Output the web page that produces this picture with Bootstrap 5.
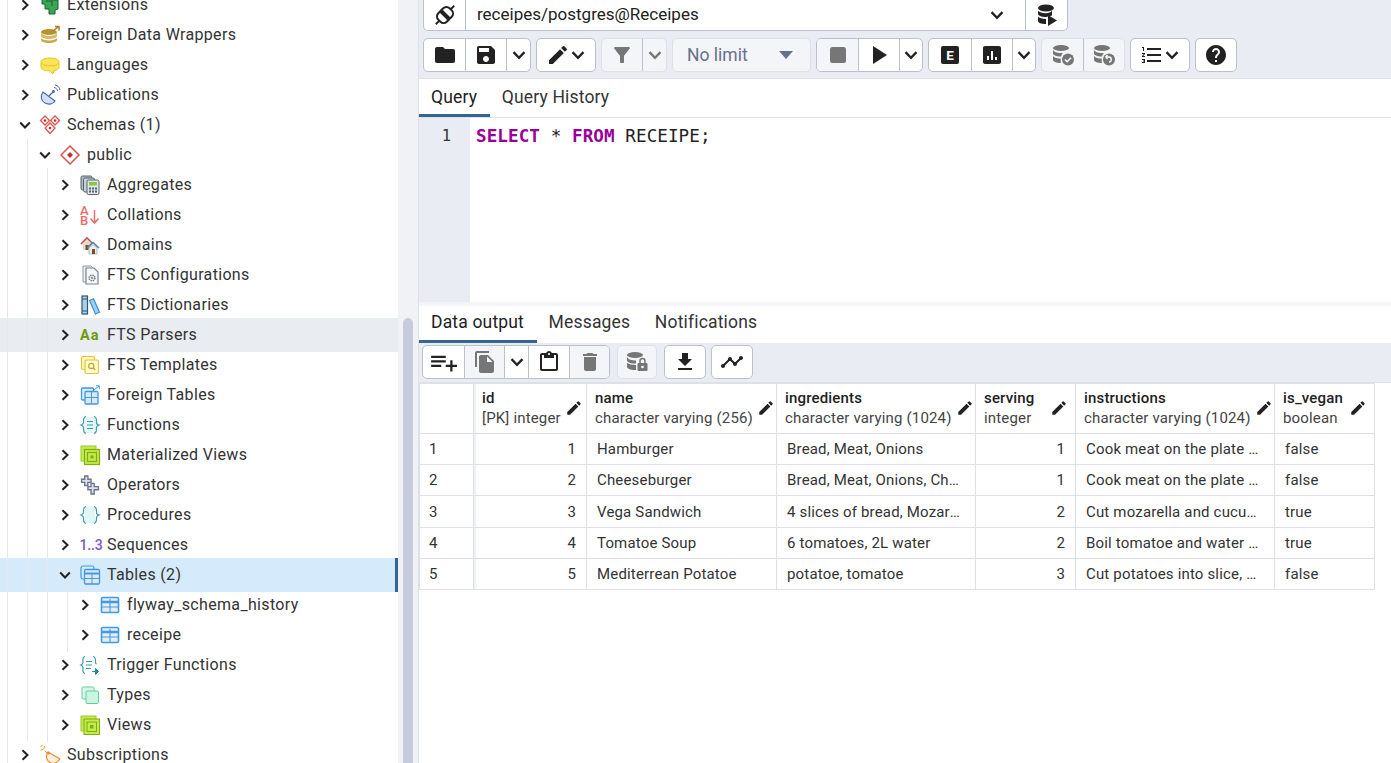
<!DOCTYPE html>
<html lang="en"><head><meta charset="utf-8"><title>pgAdmin query tool</title>
<link href="https://cdn.jsdelivr.net/npm/bootstrap@5.3.0/dist/css/bootstrap.min.css" rel="stylesheet">
<style>
html,body{height:763px;overflow:hidden;background:#fff;font-family:Roboto,"Liberation Sans",sans-serif;color:#222;font-size:16px}
.side{width:419px;height:763px;border-right:1px solid #dde0e6;flex:none}
.tree{width:398px;height:763px;overflow:hidden;position:relative;z-index:0;flex:none}
.rootg{margin-top:-12px;margin-left:7px;border-left:1px solid #e6e8ec}
.subg{margin-left:19px;border-left:1px solid #e6e8ec;padding-bottom:4px;margin-bottom:-4px}
.trow{height:34px;margin-bottom:-4px;display:flex;align-items:center;padding-left:10px;position:relative;color:#333;white-space:nowrap;letter-spacing:.33px}
.trow.hov::before,.trow.sel::before{content:"";position:absolute;z-index:-1;left:-100px;right:0;top:0;bottom:0;background:#e9ecf1}
.trow.sel::before{background:#d5ebfb;border-right:3px solid #326690}
.chev{width:14px;height:14px;flex:none;color:#222}
.ticon{width:20px;height:20px;margin:0 7px 0 8px;flex:none;display:block;overflow:visible}
.sbar{width:20px;background:#f0f2f5;padding:318px 5px 0;flex:none}
.thumb{width:10px;height:460px;border-radius:5px 5px 0 0;background:#c6ccd9}
.bar{background:#e9ecf2;padding:0 4px;border-bottom:1px solid #dde0e6}
.bar1{height:79px}
.bar2{height:40px;padding:2px 3px 0}
.conn{height:31px;width:645px;display:flex;background:#fff;border:1px solid #bac1cd;border-top:0;border-radius:0 0 5px 5px;margin-bottom:7px;overflow:hidden}
.conn>div{display:flex;align-items:center;justify-content:center}
.cname{flex:1;justify-content:space-between!important;padding:0 20px 0 11px;border-left:1px solid #bac1cd;border-right:1px solid #bac1cd;font-size:17px;color:#222}
.tools{display:flex;gap:5px}
.tools.wide{gap:7px}
.tight{margin-left:-2px}
.grp{display:flex;height:34px;border:1px solid #bac1cd;border-radius:5px;overflow:hidden;background:#fff}
.grp.off{border-color:#dde0e6;background:#f3f5f9}
.cell{height:100%;display:flex;align-items:center;justify-content:center;border-left:1px solid #bac1cd;color:#222;flex:none}
.cell:first-child{border-left:0}
.cell.dim{background:#f3f5f9;color:#767676}
.grp.mix{border-color:#bac1cd}
.grp.off .cell{border-color:#bac1cd;color:#767676}
.ic{width:24px;height:24px;fill:currentColor;display:block}
.ic.big{width:27px;height:27px}
.ic.plug{fill:none;stroke:#222;stroke-width:2;overflow:visible}
.cv{width:16px;height:16px;display:block}
.nolimit{width:139px;justify-content:space-between;padding:0 16px 0 14px;display:flex;align-items:center;height:34px;border:1px solid #dde0e6;border-radius:5px;background:#f3f5f9;color:#66708a;font-size:17.5px}
.tabsr{display:flex;background:#fff;border-bottom:1px solid #dde0e6;height:39px}
.tabsr2{height:37px;border-bottom:0}
.tabx{padding:1px 12.5px 0 12px;height:100%;display:flex;align-items:center;font-size:17.5px;letter-spacing:.17px;color:#333;border-bottom:3px solid transparent}
.tabsr2 .tabx{padding:0 12.6px 1px 12px}
.tabx.on{border-bottom-color:#326690;color:#222}
.edit{height:184px;display:flex;background:#fff}
.gut{width:51px;background:#e9ecf2;text-align:right;padding:5px 19px 0 0;font-family:"DejaVu Sans Mono",monospace;font-size:15.5px;line-height:26px;color:#333;flex:none}
.code{padding:5px 6px 0;font-family:"DejaVu Sans Mono",monospace;font-size:17.6px;letter-spacing:.07px;line-height:26px;color:#222}
.kw{color:#909;font-weight:700}
.split{height:4px;background:#f3f4f7}
.dtable{table-layout:fixed;width:955px;border-collapse:collapse;margin:0;font-size:15px;letter-spacing:.17px;color:#333}
.dtable th,.dtable td{border:1px solid #dde0e6;white-space:nowrap;overflow:hidden;vertical-align:middle}
.dtable td{height:31px;padding:0 13px 0 10px;text-overflow:ellipsis}
.dtable tr.tall td{height:32px;padding-top:1px}
.dtable th{height:50px;font-weight:400;padding:0 8px 2px;border-top-color:#dde0e6}
.dtable td.num{text-align:right;padding:0 10px}
.dtable td.rn{padding:0 9px;color:#333}
.dtable .shade{box-shadow:inset 5px 0 4px -4px #e4e6ea}
.hw{display:flex;align-items:center;justify-content:space-between}
.hw b{display:block;font-weight:500;font-size:15px;line-height:20px;color:#222}
.hw span{display:block;line-height:20px;font-size:15px;color:#444}
.pen{width:18px;height:18px;fill:#222;flex:none;margin-right:-7px}
.pen.pid{margin-right:-5px}
.pen.pnar{margin-right:-1px}
.c0{width:54px}.c1{width:113px}.c2{width:190px}.c3{width:199px}.c4{width:100px}.c5{width:199px}.c6{width:100px}
</style></head><body>
<svg width="0" height="0" class="position-absolute">
<symbol id="r" viewBox="0 0 14 14"><path d="M4.5 2.2 9.5 7l-5 4.8" fill="none" stroke="currentColor" stroke-width="2"/></symbol>
<symbol id="d" viewBox="0 0 14 14"><path d="M2.2 4.5 7 9.5l4.8-5" fill="none" stroke="currentColor" stroke-width="2"/></symbol>
<symbol id="tb" viewBox="0 0 20 20"><rect x="1.5" y="2.5" width="17" height="15" rx="1" fill="#e9ecef" stroke="#3d9be9" stroke-width="1.6"/><path d="M1.5 7h17" stroke="#3d9be9" stroke-width="2.5"/><path d="M10 4v13M1.5 12h17" stroke="#3d9be9" stroke-width="1.1"/></symbol>
<symbol id="pn" viewBox="0 0 24 24"><path d="M3 17.250V21h3.750L17.810 9.940l-3.750-3.750L3 17.250zM20.710 7.040a1 1 0 0 0 0-1.410l-2.340-2.340a1 1 0 0 0-1.410 0l-1.830 1.830 3.750 3.750 1.830-1.830z"/></symbol>
</svg>
<div class="d-flex">
<aside class="side d-flex">
<div class="tree"><div class="rootg">
<div class="trow"><svg class="chev"><use href="#r"/></svg><svg class="ticon" viewBox="0 0 20 20"><path d="M2 0h10v5h6v9l-3 1v4H9v-5H5V9H2z" fill="#3aa655" stroke="#14602a"/><path d="M6 6h6v5" stroke="#14602a" fill="none"/></svg>Extensions</div>
<div class="trow"><svg class="chev"><use href="#r"/></svg><svg class="ticon" viewBox="0 0 20 20"><ellipse cx="9" cy="7" rx="8" ry="3" fill="#b8922e"/><path d="M1 8v3c0 1.600 3.500 3 8 3s8-1.400 8-3V8c-1 1.500-4 3-8 3S2 9.500 1 8z" fill="#d6bb66"/><path d="M1 13v2c0 1.600 3.500 3 8 3s8-1.400 8-3v-2c-1 1.500-4 2.500-8 2.500S2 14.500 1 13z" fill="#c9a94a"/><path d="M13 6l5-4M15 1.500h4v4" stroke="#a88426" stroke-width="1.500" fill="none"/></svg>Foreign Data Wrappers</div>
<div class="trow"><svg class="chev"><use href="#r"/></svg><svg class="ticon" viewBox="0 0 20 20"><path d="M10 3c5 0 9 1.500 9 4v5c0 2-2 3-5 3.500L13 19l-3-3.200C5 15.800 1 14.500 1 12V7c0-2.500 4-4 9-4z" fill="#ffe45c" stroke="#e3c419"/><path d="M1.500 8c1 2 4.500 3 8.500 3s7.500-1 8.500-3" fill="none" stroke="#e3c419"/></svg>Languages</div>
<div class="trow"><svg class="chev"><use href="#r"/></svg><svg class="ticon" viewBox="0 0 20 20"><path d="M3 7c-3 4-2 9 2 11s8 1 10-2z" fill="#d5e0f5" stroke="#4468bd" stroke-width="1.200"/><path d="M9 11l4-4" stroke="#4468bd" stroke-width="1.200"/><circle cx="13.500" cy="6.500" r="1.400" fill="#4468bd"/><path d="M14 2.500c2 .3 3.400 1.700 3.600 3.500M15 0c2.800.4 4.600 2.400 5 5" stroke="#4468bd" fill="none"/></svg>Publications</div>
<div class="trow"><svg class="chev"><use href="#d"/></svg><svg class="ticon" viewBox="0 0 20 20"><g fill="#fff" stroke="#d9534f" stroke-width="1.300"><path d="M5 1l4.500 4.500L5 10 .5 5.500z"/><path d="M15 1l4.500 4.500L15 10l-4.500-4.500z"/><path d="M10 8l5 5-5 5.500L5 13z"/></g><circle cx="5" cy="5.500" r="1.300" fill="#b8322d"/><circle cx="15" cy="5.500" r="1.300" fill="#b8322d"/><circle cx="10" cy="13" r="1.300" fill="#b8322d"/></svg>Schemas (1)</div>
<div class="subg">
<div class="trow"><svg class="chev"><use href="#d"/></svg><svg class="ticon" viewBox="0 0 20 20"><path d="M10 1l9 9-9 9-9-9z" fill="#fff" stroke="#d9534f" stroke-width="1.500"/><path d="M10 7l3 3-3 3-3-3z" fill="#c4302b"/></svg>public</div>
<div class="subg">
<div class="trow"><svg class="chev"><use href="#r"/></svg><svg class="ticon" viewBox="0 0 20 20"><rect x="1" y="1" width="11" height="14" rx="1.500" fill="#aeb9c1" stroke="#546570"/><rect x="3.500" y="3" width="11" height="14" rx="1.500" fill="#c9d1d7" stroke="#546570"/><rect x="7" y="5" width="12" height="14.500" rx="1.500" fill="#dfe6ea" stroke="#546570"/><rect x="9" y="7" width="8" height="3.500" fill="#8dc63f"/><path d="M9 12.500h2v2H9zM12 12.500h2v2h-2zM15 12.500h2v2h-2zM9 15.500h2v2H9zM12 15.500h2v2h-2zM15 15.500h2v2h-2z" fill="#546570"/></svg>Aggregates</div>
<div class="trow"><svg class="chev"><use href="#r"/></svg><svg class="ticon" viewBox="0 0 20 20"><text x="0" y="9.500" font-family="Roboto,sans-serif" font-weight="500" font-size="13" letter-spacing="0" fill="#e96b6b">A</text><text x="0" y="20" font-family="Roboto,sans-serif" font-weight="500" font-size="13" letter-spacing="0" fill="#e96b6b">B</text><path d="M14.500 5v13M10.500 13.500l4 4.500 4-4.500" stroke="#e96b6b" stroke-width="1.500" fill="none"/></svg>Collations</div>
<div class="trow"><svg class="chev"><use href="#r"/></svg><svg class="ticon" viewBox="0 0 20 20"><path d="M1 9l6-6 5 5" fill="none" stroke="#c2524a" stroke-width="1.600"/><path d="M3 9v6h8V8L7 4.500z" fill="#e6d9c5"/><rect x="5.500" y="10" width="3" height="5" fill="#7a4a2b"/><path d="M7 13l6-5.500L19 13" fill="none" stroke="#4f7da3" stroke-width="1.600"/><path d="M9 13v6h8v-6l-4-3.500z" fill="#f2efe8" stroke="#8aa4b8" stroke-width=".7"/><rect x="12" y="14" width="3" height="5" fill="#7a4a2b"/></svg>Domains</div>
<div class="trow"><svg class="chev"><use href="#r"/></svg><svg class="ticon" viewBox="0 0 20 20"><path d="M3 1h8l3 3v13H3z" fill="#eceff1" stroke="#8f9aa3"/><path d="M6 3h8l4 4v12H6z" fill="#f6f7f8" stroke="#7a858e" stroke-width="1.200"/><circle cx="12" cy="13" r="2.800" fill="none" stroke="#6d7780" stroke-width="1.600" stroke-dasharray="1.400 .8"/><circle cx="12" cy="13" r="1" fill="#6d7780"/></svg>FTS Configurations</div>
<div class="trow"><svg class="chev"><use href="#r"/></svg><svg class="ticon" viewBox="0 0 20 20"><rect x="2" y="1" width="5.500" height="18" fill="#a6d1ef" stroke="#36556f" stroke-width="1.200"/><path d="M2 4h5.500M2 16h5.500" stroke="#36556f"/><path d="M9.500 5.500l4-1.800 6 13.500-4 1.800z" fill="#9ed0f2" stroke="#3d92d0" stroke-width="1.200"/></svg>FTS Dictionaries</div>
<div class="trow hov"><svg class="chev"><use href="#r"/></svg><svg class="ticon" viewBox="0 0 20 20"><text x="0" y="15" font-family="Roboto,sans-serif" font-weight="700" font-size="14.500" letter-spacing="1" fill="#6c9a0c">Aa</text></svg>FTS Parsers</div>
<div class="trow"><svg class="chev"><use href="#r"/></svg><svg class="ticon" viewBox="0 0 20 20"><rect x="1.500" y="1.500" width="13" height="13" rx="1.500" fill="#fdf6c8" stroke="#dfc92c" stroke-width="1.200"/><rect x="5" y="5" width="13.500" height="13.500" rx="1.500" fill="#fdf9d9" stroke="#dfc92c" stroke-width="1.200"/><circle cx="11.300" cy="11" r="2.600" fill="none" stroke="#c8a71c" stroke-width="1.200"/><path d="M13.200 13l2 2" stroke="#c8a71c" stroke-width="1.300"/></svg>FTS Templates</div>
<div class="trow"><svg class="chev"><use href="#r"/></svg><svg class="ticon" viewBox="0 0 20 20"><rect x="1.500" y="3" width="12" height="12" rx="1" fill="#d8ecfb" stroke="#3d9be9" stroke-width="1.300"/><rect x="5" y="6.500" width="13" height="12.500" rx="1" fill="#dfe7ee" stroke="#3d9be9" stroke-width="1.300"/><path d="M11.500 6.500V19M5 12.500h13" stroke="#3d9be9"/><path d="M14 5l5-4M16 .8h3.300v3.400" stroke="#3d9be9" fill="none"/></svg>Foreign Tables</div>
<div class="trow"><svg class="chev"><use href="#r"/></svg><svg class="ticon" viewBox="0 0 20 20"><path d="M6 1.500C3 2 3.500 5.500 3.500 7.500 3.500 9 1 10 1 10s2.500 1 2.500 2.500S3 18 6 18.500M14 1.500c3 .5 2.500 4 2.500 6s2.500 2.500 2.500 2.500-2.500 1-2.500 2.500.5 5.500-2.500 6" fill="#e4f6f8" stroke="#3a9caa" stroke-width="1.200"/><rect x="6" y="2" width="8" height="16" fill="#e4f6f8"/><path d="M7 6.500h6M7 10h6M7 13.500h6" stroke="#3a9caa" stroke-width="1.200"/></svg>Functions</div>
<div class="trow"><svg class="chev"><use href="#r"/></svg><svg class="ticon" viewBox="0 0 20 20"><rect x="1" y="1" width="15" height="15" fill="#c3ea4e" stroke="#9ccc23"/><rect x="4.500" y="4.500" width="15" height="15" fill="#c3ea4e" stroke="#7fae11" stroke-width="1.200"/><rect x="7.500" y="7.500" width="9" height="9" fill="none" stroke="#7fae11" stroke-width="1.200"/><rect x="10.500" y="10.500" width="3" height="3" fill="#7fae11"/></svg>Materialized Views</div>
<div class="trow"><svg class="chev"><use href="#r"/></svg><svg class="ticon" viewBox="1 0 18 19"><path d="M5 1h3v3h3v3H8v3H5V7H2V4h3zM11 8h3v3h4v3h-4v4h-3v-4H8v-3h3z" fill="#dce0e8" stroke="#6b7488" stroke-width="1.300"/></svg>Operators</div>
<div class="trow"><svg class="chev"><use href="#r"/></svg><svg class="ticon" viewBox="0 0 20 20"><rect x="5" y="1.500" width="10" height="17" rx="4" fill="#dff7f7"/><path d="M6 1.500C3 2 3.500 5.500 3.500 7.500 3.500 9 1 10 1 10s2.500 1 2.500 2.500S3 18 6 18.500" fill="none" stroke="#3a9caa" stroke-width="1.200"/><path d="M14 1.500c3 .5 2.500 4 2.500 6s2.500 2.500 2.500 2.500-2.500 1-2.500 2.500.5 5.500-2.500 6" fill="none" stroke="#3a9caa" stroke-width="1.200"/></svg>Procedures</div>
<div class="trow"><svg class="chev"><use href="#r"/></svg><svg class="ticon" viewBox="0 0 20 20"><text x="-.5" y="15" font-family="Roboto,sans-serif" font-weight="500" font-size="14" letter-spacing="-.2" fill="#7e57c9">1..3</text></svg>Sequences</div>
<div class="trow sel"><svg class="chev"><use href="#d"/></svg><svg class="ticon" viewBox="0 0 20 20"><rect x="1" y="1" width="13" height="13" rx="2" fill="#d5ebfb" stroke="#3d9be9" stroke-width="1.200"/><rect x="4.500" y="4.500" width="15" height="14.500" rx="1" fill="#e2e7ec" stroke="#3d9be9" stroke-width="1.300"/><path d="M4.500 8.500h15" stroke="#3d9be9" stroke-width="2"/><path d="M12 8.500V19M4.500 13.500h15" stroke="#3d9be9"/></svg>Tables (2)</div>
<div class="subg">
<div class="trow"><svg class="chev"><use href="#r"/></svg><svg class="ticon"><use href="#tb"/></svg>flyway_schema_history</div>
<div class="trow"><svg class="chev"><use href="#r"/></svg><svg class="ticon"><use href="#tb"/></svg>receipe</div>
</div>
<div class="trow"><svg class="chev"><use href="#r"/></svg><svg class="ticon" viewBox="0 0 20 20"><path d="M5 1.500C2 2 3 5.500 3 7.500 3 9 .8 10 .8 10S3 11 3 12.500 2 18 5 18.500M13 1.500c3 .5 2.500 4 2.500 6 0 1 1 1.800 1 1.800" fill="none" stroke="#3a9caa" stroke-width="1.200"/><path d="M6 6.500h6M6 10h6M6 13.500h5" stroke="#3a9caa" stroke-width="1.200"/><path d="M12 16.500h5M15.500 13.500l3 3-3 3z" stroke="#1d8aa8" fill="#1d8aa8"/></svg>Trigger Functions</div>
<div class="trow"><svg class="chev"><use href="#r"/></svg><svg class="ticon" viewBox="0 0 20 20"><rect x="2" y="2" width="12" height="12" rx="1" fill="#d7f6e8" stroke="#66cc9e"/><rect x="6" y="6" width="12.500" height="12.500" rx="1" fill="#c9f5e1" stroke="#66cc9e"/></svg>Types</div>
<div class="trow"><svg class="chev"><use href="#r"/></svg><svg class="ticon" viewBox="0 0 20 20"><rect x="1" y="1" width="15" height="15" fill="#c3ea4e" stroke="#9ccc23"/><rect x="4" y="4" width="15.500" height="15.500" fill="#c3ea4e" stroke="#7fae11"/><rect x="7" y="7" width="9.500" height="9.500" fill="none" stroke="#7fae11"/><rect x="10" y="10" width="3.500" height="3.500" fill="#7fae11"/></svg>Views</div>
</div></div>
<div class="trow"><svg class="chev"><use href="#r"/></svg><svg class="ticon" viewBox="0 0 20 20"><path d="M8 7c-3 4-1 10 3 11s7-1 9-4z" fill="#fdf0dc" stroke="#ec8f2d" stroke-width="1.200"/><circle cx="8.500" cy="8" r="1.500" fill="#ec8f2d"/><path d="M7 8 5 6M.5 5c2.500 0 4-1.500 4-4M.5 1.500c1 0 1.500-.5 1.500-1.500" stroke="#ec8f2d" fill="none"/></svg>Subscriptions</div>
</div></div>
<div class="sbar"><div class="thumb"></div></div>
</aside>
<main class="flex-grow-1">
<div class="bar bar1">
<div class="conn">
<div style="width:41px"><svg class="ic plug" viewBox="0 0 24 24"><g transform="rotate(-45 12 12)"><path d="M-1 12h5M20 12h5M11 6H8.500A4.500 4.500 0 0 0 4 10.500v3A4.500 4.500 0 0 0 8.500 18H11zM13 6h2.500A4.500 4.500 0 0 1 20 10.500v3a4.500 4.500 0 0 1-4.500 4.500H13zM10 9.500h4M10 14.500h4"/></g></svg></div>
<div class="cname"><span>receipes/postgres@Receipes</span><svg class="cv" viewBox="0 0 14 14"><use href="#d"/></svg></div>
<div style="width:41px"><svg class="ic" viewBox="0 0 24 24"><ellipse cx="11" cy="5" rx="8" ry="3.500"/><path d="M3 7.500v3.500c0 1.500 3 3 8 3l6-1.500V7.500c-1 1.800-3.500 2.800-6 2.800s-7-1-8-2.800zM3 13.500V18c0 1.700 3 3 8 3v-5c-4 0-7-1-8-2.500z"/><path d="M13 12v11l9-5.500z"/></svg></div>
</div>
<div class="tools">
<div class="grp"><div class="cell" style="width:41px"><svg class="ic" viewBox="0 0 24 24"><path d="M10 4H4c-1.100 0-2 .9-2 2v12c0 1.100.9 2 2 2h16c1.100 0 2-.9 2-2V8c0-1.100-.9-2-2-2h-8l-2-2z"/></svg></div><div class="cell" style="width:41px"><svg class="ic" viewBox="0 0 24 24"><path d="M17 3H5c-1.110 0-2 .9-2 2v14c0 1.100.89 2 2 2h14c1.100 0 2-.9 2-2V7l-4-4zm-5 16c-1.660 0-3-1.340-3-3s1.340-3 3-3 3 1.340 3 3-1.340 3-3 3zm3-10H5V5h10v4z"/></svg></div><div class="cell" style="width:24px"><svg class="cv"><use href="#d"/></svg></div></div>
<div class="grp"><div class="cell" style="width:58px"><svg class="ic" viewBox="0 0 24 24"><use href="#pn"/></svg><svg class="cv"><use href="#d"/></svg></div></div>
<div class="grp off"><div class="cell" style="width:40px"><svg class="ic" viewBox="0 0 24 24"><path d="M4.250 5.610C6.270 8.200 10 13 10 13v6c0 .55.45 1 1 1h2c.55 0 1-.45 1-1v-6s3.720-4.800 5.740-7.390c.51-.66.04-1.610-.79-1.610H5.040c-.83 0-1.300.95-.79 1.610z"/></svg></div><div class="cell" style="width:24px"><svg class="cv"><use href="#d"/></svg></div></div>
<div class="nolimit"><span>No limit</span><svg width="16" height="8" viewBox="0 0 16 8"><path d="M1 0h14L8 8z" fill="#66708a"/></svg></div>
<div class="grp mix"><div class="cell dim" style="width:41px"><svg class="ic" viewBox="0 0 24 24"><rect x="4" y="4" width="16" height="16" rx="2.500"/></svg></div><div class="cell" style="width:41px"><svg class="ic" viewBox="0 0 24 24"><path d="M6 3v18l14-9z"/></svg></div><div class="cell" style="width:23px"><svg class="cv"><use href="#d"/></svg></div></div>
<div class="grp"><div class="cell" style="width:42px"><svg class="ic" viewBox="0 0 24 24"><rect x="3" y="3" width="18" height="18" rx="2"/><text x="12" y="17" text-anchor="middle" font-family="Roboto,sans-serif" font-size="13.500" font-weight="700" fill="#fff">E</text></svg></div><div class="cell" style="width:41px"><svg class="ic" viewBox="0 0 24 24"><path d="M19 3H5c-1.100 0-2 .9-2 2v14c0 1.100.9 2 2 2h14c1.100 0 2-.9 2-2V5c0-1.100-.9-2-2-2zM9 17H7v-4h2v4zm4 0h-2V8h2v9zm4 0h-2v-3h2v3z"/></svg></div><div class="cell" style="width:23px"><svg class="cv"><use href="#d"/></svg></div></div>
<div class="grp off"><div class="cell" style="width:41px"><svg class="ic" viewBox="0 0 24 24"><ellipse cx="10" cy="5" rx="8" ry="3"/><path d="M2 7v3.500c0 1.500 3 3 8 3 .5-1.500 1-2.500 2-3.500-1 .2-8 .5-10-3zM2 13v4c0 1.500 3 3 8 3-.3-1-.5-2.500-.2-4.500C6 15.500 3.500 15 2 13z"/><circle cx="17" cy="16.500" r="6"/><path d="M14 16.500l2.200 2.200 3.800-4" fill="none" stroke="#fff" stroke-width="1.500"/></svg></div><div class="cell" style="width:41px"><svg class="ic" viewBox="0 0 24 24"><ellipse cx="10" cy="5" rx="8" ry="3"/><path d="M2 7v3.500c0 1.500 3 3 8 3 .5-1.500 1-2.500 2-3.500-1 .2-8 .5-10-3zM2 13v4c0 1.500 3 3 8 3-.3-1-.5-2.500-.2-4.500C6 15.500 3.500 15 2 13z"/><circle cx="17" cy="16.500" r="6"/><path d="M17 14h-3.500M13.500 14l2-2M13.500 14l2 2M17 14c3 0 3 5 0 5" fill="none" stroke="#fff" stroke-width="1.300"/></svg></div></div>
<div class="grp"><div class="cell" style="width:58px"><svg class="ic" viewBox="0 0 24 24"><path d="M2 17h2v.5H3v1h1v.5H2v1h3v-4H2v1zm1-9h1V4H2v1h1v3zm-1 3h1.800L2 13.100v.9h3v-1H3.200L5 10.900V10H2v1zm5-6v2h14V5H7zm0 14h14v-2H7v2zm0-6h14v-2H7v2z"/></svg><svg class="cv"><use href="#d"/></svg></div></div>
<div class="grp"><div class="cell" style="width:40px"><svg class="ic" viewBox="0 0 24 24"><path d="M12 2C6.480 2 2 6.480 2 12s4.480 10 10 10 10-4.480 10-10S17.520 2 12 2zm1 17h-2v-2h2v2zm2.070-7.750l-.9.920C13.450 12.900 13 13.500 13 15h-2v-.5c0-1.100.45-2.100 1.170-2.830l1.240-1.260c.37-.36.59-.86.59-1.410 0-1.100-.9-2-2-2s-2 .9-2 2H8c0-2.210 1.790-4 4-4s4 1.790 4 4c0 .88-.36 1.680-.93 2.250z"/></svg></div></div>
</div>
</div>
<div class="tabsr"><div class="tabx on">Query</div><div class="tabx">Query History</div></div>
<div class="edit"><div class="gut">1</div><div class="code"><span class="kw">SELECT</span> * <span class="kw">FROM</span> RECEIPE;</div></div>
<div class="split"></div>
<div class="tabsr tabsr2"><div class="tabx on">Data output</div><div class="tabx">Messages</div><div class="tabx">Notifications</div></div>
<div class="bar bar2"><div class="tools wide">
<div class="grp mix"><div class="cell" style="width:41px"><svg class="ic big" viewBox="0 0 24 24"><path d="M14 10H1v2h13v-2zm0-4H1v2h13V6zm6 8v-4h-2v4h-4v2h4v4h2v-4h4v-2h-4zM1 16h9v-2H1v2z"/></svg></div><div class="cell dim" style="width:40px"><svg class="ic" viewBox="0 0 24 24"><path d="M16 1H4c-1.100 0-2 .9-2 2v14h2V3h12V1zm-1 4l6 6v10c0 1.100-.9 2-2 2H7.990C6.890 23 6 22.100 6 21l.01-14c0-1.100.89-2 1.990-2h7zm-1 7h5.500L14 6.500V12z"/></svg></div><div class="cell" style="width:24px"><svg class="cv"><use href="#d"/></svg></div><div class="cell" style="width:41px"><svg class="ic" viewBox="0 0 24 24"><path d="M19 3h-4.180C14.400 1.840 13.300 1 12 1c-1.300 0-2.400.84-2.820 2H5c-1.100 0-2 .9-2 2v14c0 1.100.9 2 2 2h14c1.100 0 2-.9 2-2V5c0-1.100-.9-2-2-2zm-7 0c.55 0 1 .45 1 1s-.45 1-1 1-1-.45-1-1 .45-1 1-1zm7 16H5V5h2v3h10V5h2v14z"/></svg></div><div class="cell dim" style="width:40px"><svg class="ic" viewBox="0 0 24 24"><path d="M6 19c0 1.100.9 2 2 2h8c1.100 0 2-.9 2-2V7H6v12zM19 4h-3.500l-1-1h-5l-1 1H5v2h14V4z"/></svg></div></div>
<div class="grp off"><div class="cell" style="width:38px"><svg class="ic" viewBox="0 0 24 24"><ellipse cx="10" cy="5" rx="8" ry="3"/><path d="M2 7v3.500c0 1.500 3 3 8 3h1v-3c-4 0-8-1-9-3.500zM2 13v4c0 1.500 3 3 8 3h1v-5c-4 0-7-1-9-2z"/><rect x="12.500" y="13" width="10" height="8" rx="1"/><path d="M15 13v-2a2.500 2.500 0 0 1 5 0v2" fill="none" stroke="currentColor" stroke-width="1.500"/><circle cx="17.500" cy="17" r="1.300" fill="#fff"/></svg></div></div>
<div class="grp"><div class="cell" style="width:40px"><svg class="ic" viewBox="0 0 24 24"><path d="M19 9h-4V3H9v6H5l7 7 7-7zM5 18v2h14v-2H5z"/></svg></div></div>
<div class="grp tight"><div class="cell" style="width:40px"><svg class="ic" viewBox="0 0 24 24"><path d="M23 8c0 1.100-.9 2-2 2-.18 0-.35-.02-.51-.07l-3.560 3.550c.05.16.07.34.07.52 0 1.100-.9 2-2 2s-2-.9-2-2c0-.18.02-.36.07-.52l-2.550-2.550c-.16.05-.34.07-.52.07s-.36-.02-.52-.07l-4.550 4.560c.05.16.07.33.07.51 0 1.100-.9 2-2 2s-2-.9-2-2 .9-2 2-2c.18 0 .35.02.51.07l4.560-4.550C8.020 9.360 8 9.180 8 9c0-1.100.9-2 2-2s2 .9 2 2c0 .18-.02.36-.07.52l2.550 2.550c.16-.05.34-.07.52-.07s.36.02.52.07l3.550-3.560C19.020 8.350 19 8.180 19 8c0-1.100.9-2 2-2s2 .9 2 2z"/></svg></div></div>
</div></div>
<table class="dtable">
<colgroup><col class="c0"><col class="c1"><col class="c2"><col class="c3"><col class="c4"><col class="c5"><col class="c6"></colgroup>
<thead><tr>
<th></th>
<th class="shade"><div class="hw"><div><b>id</b><span>[PK] integer</span></div><svg class="pen pid"><use href="#pn"/></svg></div></th>
<th><div class="hw"><div><b>name</b><span>character varying (256)</span></div><svg class="pen"><use href="#pn"/></svg></div></th>
<th><div class="hw"><div><b>ingredients</b><span>character varying (1024)</span></div><svg class="pen"><use href="#pn"/></svg></div></th>
<th><div class="hw"><div><b>serving</b><span>integer</span></div><svg class="pen pnar"><use href="#pn"/></svg></div></th>
<th><div class="hw"><div><b>instructions</b><span>character varying (1024)</span></div><svg class="pen"><use href="#pn"/></svg></div></th>
<th><div class="hw"><div><b>is_vegan</b><span>boolean</span></div><svg class="pen pnar"><use href="#pn"/></svg></div></th>
</tr></thead>
<tbody>
<tr><td class="rn">1</td><td class="num shade">1</td><td>Hamburger</td><td>Bread, Meat, Onions</td><td class="num">1</td><td>Cook meat on the plate and put it between the bread</td><td>false</td></tr>
<tr><td class="rn">2</td><td class="num shade">2</td><td>Cheeseburger</td><td>Bread, Meat, Onions, Cheese</td><td class="num">1</td><td>Cook meat on the plate and add the cheese</td><td>false</td></tr>
<tr class="tall"><td class="rn">3</td><td class="num shade">3</td><td>Vega Sandwich</td><td>4 slices of bread, Mozarella, Cucumber</td><td class="num">2</td><td>Cut mozarella and cucumber and place on bread</td><td>true</td></tr>
<tr><td class="rn">4</td><td class="num shade">4</td><td>Tomatoe Soup</td><td>6 tomatoes, 2L water</td><td class="num">2</td><td>Boil tomatoe and water and then blend</td><td>true</td></tr>
<tr><td class="rn">5</td><td class="num shade">5</td><td>Mediterrean Potatoe</td><td>potatoe, tomatoe</td><td class="num">3</td><td>Cut potatoes into slice, add the tomatoe</td><td>false</td></tr>
</tbody></table>
</main>
</div>
</body></html>
